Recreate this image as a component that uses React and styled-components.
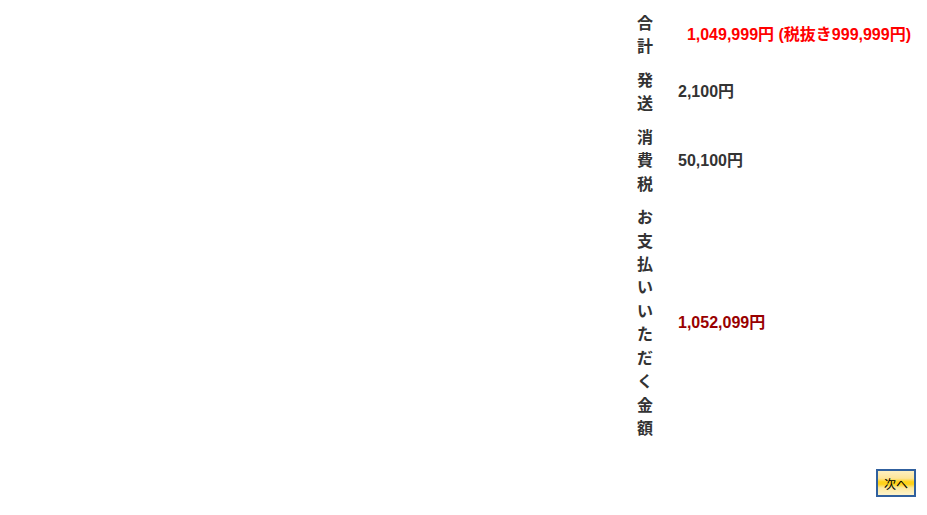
import React from 'react';
import styled, { createGlobalStyle } from 'styled-components';

const GlobalStyle = createGlobalStyle`
  body {
    margin: 0;
    background: #fff;
    font-family: "Liberation Sans", "Noto Sans CJK JP", sans-serif;
  }
`;

const rows = [
  { label: '合計', value: '1,049,999円 (税抜き999,999円)', tone: 'red', align: 'end' },
  { label: '発送', value: '2,100円' },
  { label: '消費税', value: '50,100円' },
  { label: 'お支払いいただく金額', value: '1,052,099円', tone: 'maroon' },
];

const toneColor = {
  red: '#ff0000',
  maroon: '#990000',
  plain: '#333333',
};

const App = () => {
  return (
    <>
      <GlobalStyle />
      <Page>
        <Summary>
          {rows.map((row) => (
            <Row key={row.label}>
              <Label>{row.label}</Label>
              <Value $tone={row.tone || 'plain'} $align={row.align || 'start'}>
                {row.value}
              </Value>
            </Row>
          ))}
        </Summary>
        <NextButton type="button">次へ</NextButton>
      </Page>
    </>
  );
};

export default App;

const Page = styled.div`
  display: flex;
  flex-direction: column;
  align-items: flex-end;
  padding: 7px 11px 0 0;
`;

const Summary = styled.div`
  display: flex;
  flex-direction: column;
  margin-right: 5px;
`;

const Row = styled.div`
  display: grid;
  grid-template-columns: 16px 233px;
  column-gap: 25px;
  align-items: center;
  padding: 5px 0;
`;

const Label = styled.div`
  font-size: 16px;
  line-height: 23.44px;
  font-weight: bold;
  color: #333;
  word-break: break-all;
`;

const Value = styled.div`
  font-size: 16px;
  line-height: 20px;
  font-weight: bold;
  color: ${(p) => toneColor[p.$tone]};
  text-align: ${(p) => p.$align};
  white-space: nowrap;
`;

const NextButton = styled.button`
  margin-top: 24px;
  width: 40px;
  height: 28px;
  padding: 0;
  border: 2px solid #30609e;
  background: linear-gradient(
    to bottom,
    #fdf0c0 0%,
    #fde59a 30%,
    #ffd21a 45%,
    #ffd21a 55%,
    #fde89e 70%,
    #fdf3cc 100%
  );
  font-family: "Liberation Sans", "Noto Sans CJK JP", sans-serif;
  font-size: 12px;
  color: #000;
  cursor: pointer;
`;
